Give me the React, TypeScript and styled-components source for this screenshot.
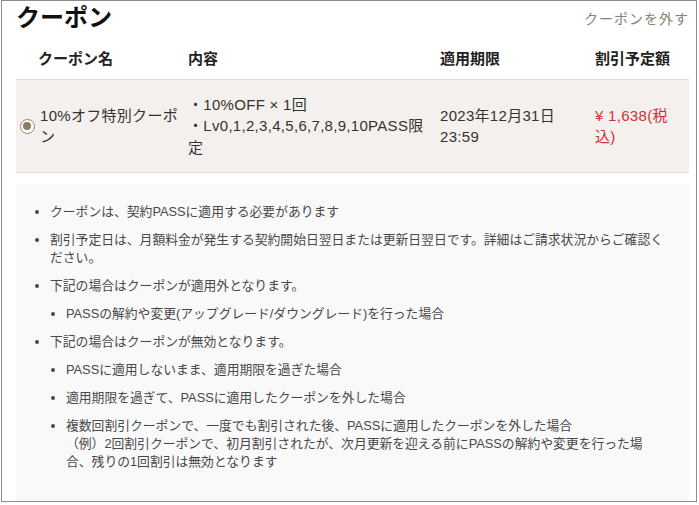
import styled, { createGlobalStyle } from "styled-components";

const GlobalStyle = createGlobalStyle`
  html, body {
    margin: 0;
    padding: 0;
    background: #ffffff;
  }
  body {
    font-family: "Liberation Sans", "Noto Sans CJK JP", sans-serif;
    color: #333333;
  }
`

const Frame = styled.div`
  display: flex;
  flex-direction: column;
  box-sizing: border-box;
  width: 696px;
  height: 502px;
  margin-left: 1px;
  padding: 0 7px 0 14px;
  border: 1px solid #8c8c8c;
  overflow: hidden;
`

const TitleBar = styled.div`
  display: flex;
  justify-content: space-between;
  align-items: center;
  height: 34px;
`

const Title = styled.h1`
  margin: 0;
  font-size: 24px;
  font-weight: 700;
  line-height: 34px;
  color: #111111;
`

const RemoveLink = styled.a`
  font-size: 14px;
  letter-spacing: 1px;
  color: #8d8070;
  cursor: pointer;
  text-decoration: none;
`

const Table = styled.div`
  display: grid;
  grid-template-columns: 172px 252px 155px 1fr;
`

const HeadCell = styled.div<{ $first?: boolean }>`
  display: flex;
  align-items: center;
  height: 44px;
  padding-left: ${props => props.$first ? '22px' : '0'};
  border-bottom: 1px solid #dcdcdc;
  font-size: 15px;
  font-weight: 700;
  color: #222222;
`

const Cell = styled.div<{ $price?: boolean }>`
  display: flex;
  align-items: center;
  box-sizing: border-box;
  height: 93px;
  padding-right: ${props => props.$price ? '10px' : '12px'};
  background: #f3f0ed;
  border-bottom: 1px solid #dcdcdc;
  font-size: 15px;
  line-height: 21.5px;
  letter-spacing: 0.3px;
  color: ${props => props.$price ? '#d4303a' : '#333333'};
`

const NameCell = styled(Cell)`
  gap: 5px;
  padding-left: 4px;
  padding-right: 8px;
`

const Radio = styled.span`
  position: relative;
  flex: none;
  box-sizing: border-box;
  width: 15px;
  height: 15px;
  border: 1.5px solid #948671;
  border-radius: 50%;
  background: #ffffff;
  &::after {
    content: "";
    position: absolute;
    left: 2px;
    top: 2px;
    width: 8px;
    height: 8px;
    border-radius: 50%;
    background: #8b7b63;
  }
`

const Notes = styled.div`
  flex: 1;
  margin-top: 11px;
  padding: 19px 24px 30px 0;
  background: #f9f9f9;
`

const NoteList = styled.ul<{ $nested?: boolean }>`
  margin: ${props => props.$nested ? '10px 0 0' : '0'};
  padding-left: ${props => props.$nested ? '16px' : '34px'};
  list-style: disc;
`

const NoteItem = styled.li`
  font-size: 12.8px;
  line-height: 18px;
  color: #484848;
  & + & {
    margin-top: 10px;
  }
`

const App = () => {
  return (
    <>
      <GlobalStyle />
      <Frame>
        <TitleBar>
          <Title>クーポン</Title>
          <RemoveLink>クーポンを外す</RemoveLink>
        </TitleBar>
        <Table>
          <HeadCell $first>クーポン名</HeadCell>
          <HeadCell>内容</HeadCell>
          <HeadCell>適用期限</HeadCell>
          <HeadCell>割引予定額</HeadCell>

          <NameCell>
            <Radio />
            <span>10%オフ特別クーポン</span>
          </NameCell>
          <Cell>
            <span>
              ・10%OFF × 1回<br />
              ・Lv0,1,2,3,4,5,6,7,8,9,10PASS限定
            </span>
          </Cell>
          <Cell>
            <span>
              2023年12月31日<br />
              23:59
            </span>
          </Cell>
          <Cell $price>
            <span>¥ 1,638(税込)</span>
          </Cell>
        </Table>
        <Notes>
          <NoteList>
            <NoteItem>クーポンは、契約PASSに適用する必要があります</NoteItem>
            <NoteItem>割引予定日は、月額料金が発生する契約開始日翌日または更新日翌日です。詳細はご請求状況からご確認ください。</NoteItem>
            <NoteItem>
              下記の場合はクーポンが適用外となります。
              <NoteList $nested>
                <NoteItem>PASSの解約や変更(アップグレード/ダウングレード)を行った場合</NoteItem>
              </NoteList>
            </NoteItem>
            <NoteItem>
              下記の場合はクーポンが無効となります。
              <NoteList $nested>
                <NoteItem>PASSに適用しないまま、適用期限を過ぎた場合</NoteItem>
                <NoteItem>適用期限を過ぎて、PASSに適用したクーポンを外した場合</NoteItem>
                <NoteItem>
                  複数回割引クーポンで、一度でも割引された後、PASSに適用したクーポンを外した場合<br />
                  （例）2回割引クーポンで、初月割引されたが、次月更新を迎える前にPASSの解約や変更を行った場合、残りの1回割引は無効となります
                </NoteItem>
              </NoteList>
            </NoteItem>
          </NoteList>
        </Notes>
      </Frame>
    </>
  )
}

export default App
